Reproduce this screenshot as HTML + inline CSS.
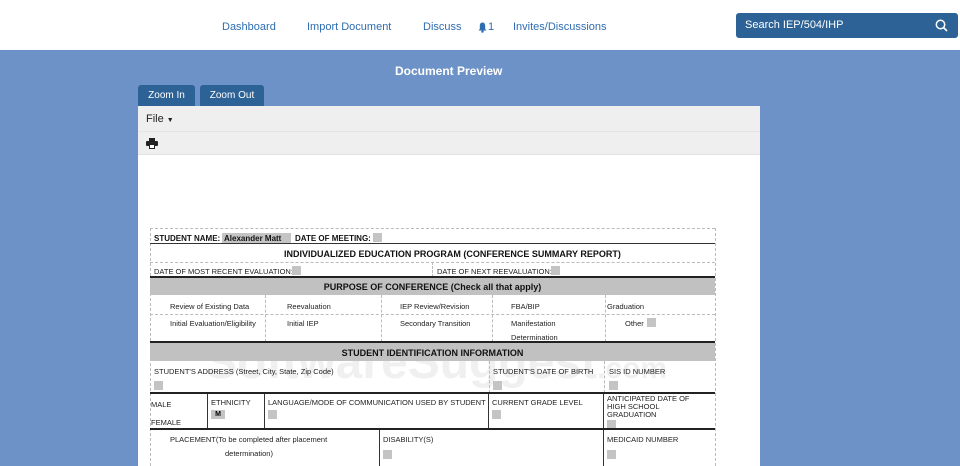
<!DOCTYPE html><html><head><style>
*{margin:0;padding:0;box-sizing:border-box}
body{width:960px;height:466px;overflow:hidden;background:#6d92c7;font-family:"Liberation Sans",sans-serif;position:relative}
.a{position:absolute;white-space:nowrap}
.hd{position:absolute;left:0;top:0;width:960px;height:50px;background:#fff}
.nav{color:#2e6db0;font-size:11px;top:21px}
.btn{background:#2d6296;color:#fff;font-size:10px;border-radius:3px 3px 0 0;text-align:center;line-height:21px;top:85px;height:21px}
.t{font-size:7.5px;color:#222}
.b{font-weight:bold;font-size:8px;color:#111}
.hl{position:absolute;height:0;border-top:1px dashed #bbb}
.hs{position:absolute;height:2px;background:#222}
.vl{position:absolute;width:0;border-left:1px dashed #bbb}
.vs{position:absolute;width:1px;background:#333}
.sq{position:absolute;width:9px;height:9px;background:#c4c4c4}
.band{position:absolute;left:150px;width:565px;background:#c1c1c1;text-align:center;font-weight:bold;font-size:9px;color:#111}
</style></head><body>
<div class="hd"></div>
<div class="a nav" style="left:222px">Dashboard</div>
<div class="a nav" style="left:307px">Import Document</div>
<div class="a nav" style="left:423px">Discuss</div>
<svg class="a" style="left:478px;top:22px" width="9" height="11" viewBox="0 0 9 11"><path d="M4.5 0.5C2.5 0.5 1.8 2 1.8 4V7L0.5 8.5H8.5L7.2 7V4C7.2 2 6.5 0.5 4.5 0.5Z" fill="#2e6db0"/><circle cx="4.5" cy="9.6" r="1.2" fill="#2e6db0"/></svg>
<div class="a nav" style="left:488px">1</div>
<div class="a nav" style="left:513px">Invites/Discussions</div>
<div class="a" style="left:736px;top:13px;width:222px;height:25px;background:#2d6296;border-radius:3px"></div>
<div class="a" style="left:745px;top:19px;color:#fff;font-size:11px">Search IEP/504/IHP</div>
<svg class="a" style="left:935px;top:19px" width="13" height="13" viewBox="0 0 13 13"><circle cx="5.5" cy="5.5" r="4.2" fill="none" stroke="#fff" stroke-width="1.5"/><line x1="8.5" y1="8.5" x2="12" y2="12" stroke="#fff" stroke-width="1.6"/></svg>
<div class="a" style="left:395px;top:64px;color:#fff;font-weight:bold;font-size:12px">Document Preview</div>
<div class="a btn" style="left:138px;width:57px">Zoom In</div>
<div class="a btn" style="left:200px;width:64px">Zoom Out</div>
<div class="a" style="left:138px;top:106px;width:622px;height:360px;background:#fff"></div>
<div class="a" style="left:138px;top:106px;width:622px;height:49px;background:#efefef;border-bottom:1px solid #e2e2e2"></div>
<div class="a" style="left:138px;top:131px;width:622px;height:1px;background:#e4e4e4"></div>
<div class="a" style="left:146px;top:113px;font-size:11px;color:#222">File <span style="font-size:7px">&#9660;</span></div>
<svg class="a" style="left:146px;top:138px" width="12" height="11" viewBox="0 0 12 11"><rect x="3" y="0" width="6" height="3" fill="#222"/><rect x="0" y="3" width="12" height="5" rx="1" fill="#222"/><rect x="3" y="6" width="6" height="5" fill="#222"/><rect x="4" y="7" width="4" height="3" fill="#fff"/></svg>

<div class="a" style="left:205px;top:335px;font-size:48px;font-weight:bold;color:rgba(205,205,205,.3)">SoftwareSuggest<span style="font-size:30px">.com</span></div>
<!-- form -->
<div class="hl" style="left:150px;top:228px;width:565px"></div>
<div class="vl" style="left:150px;top:228px;height:238px"></div>
<div class="vl" style="left:715px;top:228px;height:238px"></div>
<div class="a b" style="left:154px;top:234px">STUDENT NAME:</div>
<div class="a" style="left:222px;top:233px;width:69px;height:10px;background:#c4c4c4"></div>
<div class="a b" style="left:224px;top:234px">Alexander Matt</div>
<div class="a b" style="left:295px;top:234px">DATE OF MEETING:</div>
<div class="sq" style="left:373px;top:233px"></div>
<div class="a" style="left:150px;top:243px;width:565px;height:1px;background:#333"></div>
<div class="a b" style="left:284px;top:249px;font-size:9px">INDIVIDUALIZED EDUCATION PROGRAM (CONFERENCE SUMMARY REPORT)</div>
<div class="hl" style="left:150px;top:262px;width:565px"></div>
<div class="vl" style="left:432px;top:262px;height:15px"></div>
<div class="a t" style="left:154px;top:267px">DATE OF MOST RECENT EVALUATION:</div>
<div class="sq" style="left:292px;top:266px"></div>
<div class="a t" style="left:437px;top:267px">DATE OF NEXT REEVALUATION:</div>
<div class="sq" style="left:551px;top:266px"></div>
<div class="hs" style="left:150px;top:276px;width:565px"></div>
<div class="band" style="top:278px;height:17px;line-height:18px">PURPOSE OF CONFERENCE (Check all that apply)</div>
<div class="vl" style="left:265px;top:295px;height:47px"></div>
<div class="vl" style="left:381px;top:295px;height:47px"></div>
<div class="vl" style="left:492px;top:295px;height:47px"></div>
<div class="vl" style="left:605px;top:295px;height:47px"></div>
<div class="hl" style="left:150px;top:314px;width:565px"></div>
<div class="a t" style="left:170px;top:302px">Review of Existing Data</div>
<div class="a t" style="left:287px;top:302px">Reevaluation</div>
<div class="a t" style="left:400px;top:302px">IEP Review/Revision</div>
<div class="a t" style="left:511px;top:302px">FBA/BIP</div>
<div class="a t" style="left:607px;top:302px">Graduation</div>
<div class="a t" style="left:170px;top:319px">Initial Evaluation/Eligibility</div>
<div class="a t" style="left:287px;top:319px">Initial IEP</div>
<div class="a t" style="left:400px;top:319px">Secondary Transition</div>
<div class="a t" style="left:511px;top:319px">Manifestation</div>
<div class="a t" style="left:511px;top:333px">Determination</div>
<div class="a t" style="left:625px;top:319px">Other</div>
<div class="sq" style="left:647px;top:318px"></div>
<div class="hs" style="left:150px;top:341px;width:565px"></div>
<div class="band" style="top:343px;height:18px;line-height:20px">STUDENT IDENTIFICATION INFORMATION</div>
<div class="a t" style="left:154px;top:367px">STUDENT'S ADDRESS (Street, City, State, Zip Code)</div>
<div class="a t" style="left:493px;top:367px">STUDENT'S DATE OF BIRTH</div>
<div class="a t" style="left:609px;top:367px">SIS ID NUMBER</div>
<div class="sq" style="left:154px;top:381px"></div>
<div class="sq" style="left:493px;top:381px"></div>
<div class="sq" style="left:609px;top:381px"></div>
<div class="vl" style="left:489px;top:361px;height:32px"></div>
<div class="vl" style="left:604px;top:361px;height:32px"></div>
<div class="hs" style="left:150px;top:392px;width:565px"></div>
<div class="vs" style="left:207px;top:394px;height:35px"></div>
<div class="vs" style="left:264px;top:394px;height:35px"></div>
<div class="vs" style="left:488px;top:394px;height:35px"></div>
<div class="vs" style="left:603px;top:394px;height:35px"></div>
<div class="a t" style="left:151px;top:400px">MALE</div>
<div class="a t" style="left:151px;top:418px">FEMALE</div>
<div class="a t" style="left:211px;top:398px">ETHNICITY</div>
<div class="a" style="left:211px;top:410px;width:14px;height:9px;background:#c4c4c4;font-size:7px;font-weight:bold;text-align:center;line-height:9px">M</div>
<div class="a t" style="left:268px;top:398px">LANGUAGE/MODE OF COMMUNICATION USED BY STUDENT</div>
<div class="sq" style="left:268px;top:410px"></div>
<div class="a t" style="left:492px;top:398px">CURRENT GRADE LEVEL</div>
<div class="sq" style="left:492px;top:410px"></div>
<div class="a t" style="left:607px;top:395px;line-height:8px">ANTICIPATED DATE OF<br>HIGH SCHOOL<br>GRADUATION</div>
<div class="sq" style="left:607px;top:420px"></div>
<div class="hs" style="left:150px;top:428px;width:565px"></div>
<div class="vs" style="left:379px;top:430px;height:36px"></div>
<div class="vs" style="left:603px;top:430px;height:36px"></div>
<div class="a t" style="left:170px;top:435px">PLACEMENT(To be completed after placement</div>
<div class="a t" style="left:225px;top:449px">determination)</div>
<div class="a t" style="left:383px;top:435px">DISABILITY(S)</div>
<div class="sq" style="left:383px;top:450px"></div>
<div class="a t" style="left:607px;top:435px">MEDICAID NUMBER</div>
<div class="sq" style="left:607px;top:450px"></div>
</body></html>
